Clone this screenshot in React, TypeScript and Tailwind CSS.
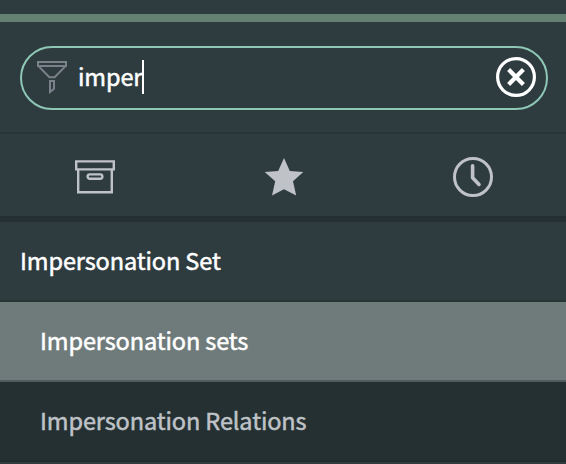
import React from 'react';

function FilterIcon() {
  return (
    <svg width="30" height="34" viewBox="0 0 30 34" fill="none" stroke="#7b818a" strokeWidth="2">
      <path d="M1 2h28v4H1zM2 6.6L12.4 17.2h5.2L28 6.6M13 21h4v7.8L13 32z" />
    </svg>
  );
}

function ClearIcon() {
  return (
    <svg width="40" height="40" viewBox="0 0 40 40" fill="none" stroke="#fff">
      <circle cx="20" cy="20" r="18.4" strokeWidth="3.2" />
      <path d="M12.6 12.6l14.8 14.8M27.4 12.6L12.6 27.4" strokeWidth="4.2" />
    </svg>
  );
}

function ArchiveIcon() {
  return (
    <svg width="40" height="34" viewBox="0 0 40 34" fill="none" stroke="#bfc2c7" strokeWidth="2.4">
      <path d="M1.2 1.4h37.6v8H1.2zM3.2 9.4v22.8h33.6V9.4" />
      <rect x="12.6" y="14.4" width="14.8" height="4.4" rx="2.2" />
    </svg>
  );
}

function StarIcon() {
  return (
    <svg width="40" height="38" viewBox="0 0 40 38" fill="#bfc2c7">
      <path d="M20 0l5.8 13.1 13.5.9-10.3 9.2 3.2 14.2L20 31.2 8 37.4l3.2-14.2L.7 14l13.5-.9z" />
    </svg>
  );
}

function ClockIcon() {
  return (
    <svg width="40" height="40" viewBox="0 0 40 40" fill="none" stroke="#bfc2c7" strokeWidth="3" strokeLinecap="round" strokeLinejoin="round">
      <circle cx="20" cy="20" r="18.5" />
      <path d="M19.6 8.7v12l6.4 6.7" strokeWidth="3.6" />
    </svg>
  );
}

export default function App() {
  return (
    <div className="flex h-[464px] w-[566px] flex-col overflow-hidden bg-[#2e3c40] font-['Noto_Sans_CJK_SC',sans-serif] text-[23.5px] tracking-[-0.11px] font-normal text-white [-webkit-text-stroke:0.5px_currentColor]">
      <div className="h-[22px] shrink-0 border-b-8 border-[#638071]" />
      <div className="h-28 shrink-0 border-b-2 border-[#273535] pr-[18px] pl-5 pt-6">
        <div className="flex h-16 items-center rounded-full border-2 border-[#8fc7b5] pr-2.5 pb-0.5 pl-[15px]">
          <FilterIcon />
          <span className="ml-[11px] pb-0.5 leading-8">imper</span>
          <span className="h-[34px] w-0.5 bg-white" />
          <button className="ml-auto" aria-label="Clear">
            <ClearIcon />
          </button>
        </div>
      </div>
      <nav className="grid h-[88px] shrink-0 grid-cols-[189px_189px_189px] place-items-center border-b-6 border-[#243031] pt-1">
        <ArchiveIcon />
        <StarIcon />
        <ClockIcon />
      </nav>
      <h2 className="flex h-20 shrink-0 items-center border-b-2 border-[#273535] pb-0.5 pl-5 font-normal leading-8">Impersonation Set</h2>
      <div className="flex h-20 shrink-0 items-center border-b-2 border-[#4f5d5e] bg-[#6f7b7b] pb-0.5 pl-10 leading-8">Impersonation sets</div>
      <div className="flex h-20 shrink-0 items-center border-b-2 border-[#202b2c] bg-[#243031] pb-0.5 pl-10 leading-8 text-[#bfc2c7]">Impersonation Relations</div>
    </div>
  );
}
